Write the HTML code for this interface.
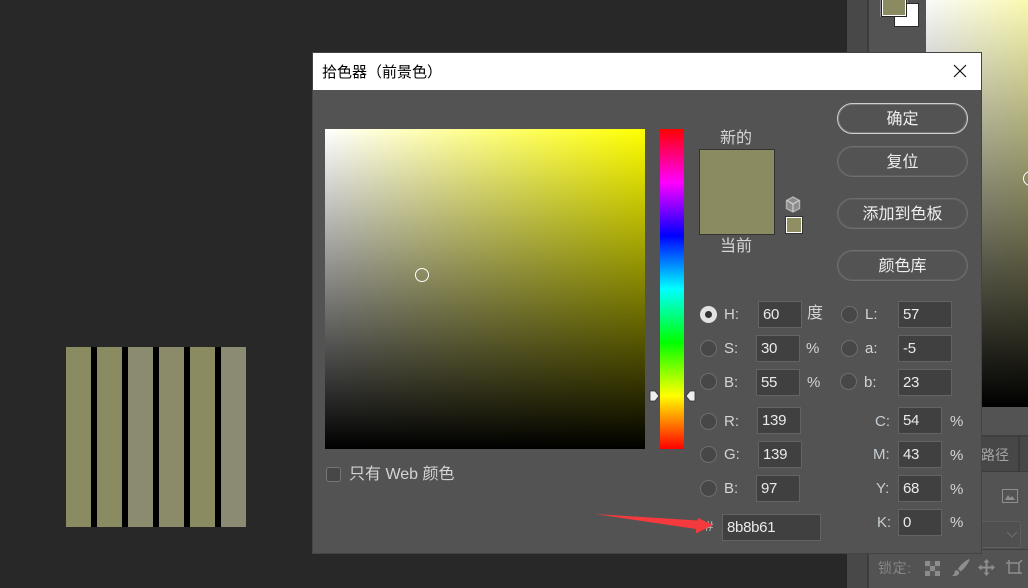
<!DOCTYPE html>
<html><head><meta charset="utf-8">
<style>
html,body{margin:0;padding:0;width:1028px;height:588px;overflow:hidden;background:#282828}
body{position:relative;font-family:"Liberation Sans","Noto Sans CJK SC",sans-serif;font-size:15px;color:#dcdcdc}
div,span{position:absolute;box-sizing:border-box}
.bar{top:347px;width:25px;height:180px}
.in{height:27px;background:#404040;border:1px solid #636363;color:#eaeaea;font-size:15px;letter-spacing:-.3px;line-height:26px;padding-left:4px;white-space:nowrap}
.r{width:17px;height:17px;border-radius:50%;background:#474747;border:1px solid #6e6e6e}
.l{line-height:20px;height:20px;white-space:nowrap;color:#d4d4d4;transform:translateY(1px)}
.btn{left:837px;width:131px;border:1px solid #6e6e6e;box-shadow:inset 0 0 0 1px #5e5e5e;border-radius:16px;text-align:center;color:#eeeeee;font-size:16px;line-height:32px;height:31px}
</style></head><body>

<div class="bar" style="left:66px;background:#8b8b61"></div>
<div class="bar" style="left:97px;background:#8b8b61"></div>
<div class="bar" style="left:128px;background:#8b8b6f"></div>
<div class="bar" style="left:159px;background:#8b8b69"></div>
<div class="bar" style="left:190px;background:#8b8b61"></div>
<div class="bar" style="left:221px;background:#8b8b74"></div>
<div style="left:91px;top:347px;width:6px;height:180px;background:#000"></div>
<div style="left:122px;top:347px;width:6px;height:180px;background:#000"></div>
<div style="left:153px;top:347px;width:6px;height:180px;background:#000"></div>
<div style="left:184px;top:347px;width:6px;height:180px;background:#000"></div>
<div style="left:215px;top:347px;width:6px;height:180px;background:#000"></div>

<!-- right app panels -->
<div style="left:847px;top:0;width:181px;height:588px;background:#535353"></div>
<div style="left:847px;top:0;width:21px;height:588px;background:#484848"></div>
<div style="left:867px;top:0;width:2px;height:588px;background:#3c3c3c"></div>
<div style="left:880px;top:0;width:28px;height:17px;background:#8a8a8a"></div>
<div style="left:894px;top:3px;width:25px;height:24px;background:#fff;border:1px solid #2a2a2a"></div>
<div style="left:882px;top:0;width:24px;height:16px;background:#8b8b61;border:1px solid #fff;border-top:0;outline:1px solid #222"></div>

<div style="left:926px;top:0;width:102px;height:407px;overflow:hidden;background:#000">
  <div style="left:0;top:-9px;width:347px;height:416px;background:linear-gradient(to top,#000,rgba(0,0,0,0)),linear-gradient(to right,#fff,#ff0)"></div>
  <div style="left:97px;top:171px;width:15px;height:15px;border-radius:50%;border:1px solid #fff"></div>
</div>
<div style="left:869px;top:407px;width:159px;height:181px;background:#535353"></div>
<div style="left:869px;top:435px;width:159px;height:2px;background:#3f3f3f"></div>
<div style="left:869px;top:437px;width:159px;height:35px;background:#474747;border-bottom:1px solid #3c3c3c"></div>
<div style="left:1018px;top:437px;width:2px;height:35px;background:#3c3c3c"></div>
<div style="left:981px;top:445px;font-size:14px;line-height:20px;color:#a6a6a6">路径</div>
<svg style="position:absolute;left:1002px;top:489px" width="16" height="14" viewBox="0 0 16 14"><rect x=".5" y=".5" width="15" height="13" fill="none" stroke="#8e8e8e"/><path d="M3 11l3-5 2 3 2-2 3 4z" fill="#8e8e8e"/></svg>
<div style="left:980px;top:521px;width:41px;height:27px;border:1px solid #5e5e5e;border-radius:3px;background:#505050"></div>
<svg style="position:absolute;left:1006px;top:531px" width="12" height="8" viewBox="0 0 12 8"><path d="M1 1l5 5 5-5" fill="none" stroke="#6e6e6e"/></svg>
<div style="left:869px;top:549px;width:159px;height:1px;background:#3f3f3f"></div>
<div style="left:878px;top:558px;font-size:14px;line-height:20px;color:#858585;letter-spacing:.6px">锁定:</div>
<svg style="position:absolute;left:925px;top:561px" width="15" height="15" viewBox="0 0 15 15"><rect width="15" height="15" fill="#8c8c8c"/><path d="M5 0h5v5H5zM0 5h5v5H0zM10 5h5v5h-5zM5 10h5v5H5z" fill="#5a5a5a"/></svg>
<svg style="position:absolute;left:952px;top:559px" width="18" height="18" viewBox="0 0 18 18"><path d="M17 0C13 2 8 6 6 10l2.500 2.500C12 10 16 5 17.500 1zM5 11c-2 0-2.500 2-2.500 3 0 1-1 2-2.500 3 4 .5 8-1 7-4z" fill="#8e8e8e"/></svg>
<svg style="position:absolute;left:978px;top:559px" width="17" height="17" viewBox="0 0 17 17"><path d="M8.500 0l3 3.500h-2v4h4v-2l3.500 3-3.500 3v-2h-4v4h2l-3 3.500-3-3.500h2v-4h-4v2L0 8.500l3.500-3v2h4v-4h-2z" fill="#8e8e8e"/></svg>
<svg style="position:absolute;left:1005px;top:559px" width="19" height="17" viewBox="0 0 19 17"><path d="M4 1v13h13M1 4h13v11M14 4l3-3" fill="none" stroke="#8e8e8e" stroke-width="1.500"/></svg>

<!-- dialog -->
<div style="left:312px;top:52px;width:670px;height:502px;background:#444"></div>
<div style="left:313px;top:53px;width:668px;height:500px;background:#535353"></div>
<div style="left:313px;top:53px;width:668px;height:37px;background:#fff"></div>
<div style="left:322px;top:63px;color:#000;font-size:15px;line-height:20px;white-space:nowrap">拾色器（前景色）</div>
<svg style="position:absolute;left:953px;top:64px" width="14" height="14" viewBox="0 0 14 14"><path d="M1 1l12 12M13 1L1 13" stroke="#111" stroke-width="1.200" fill="none"/></svg>

<!-- field -->
<div style="left:325px;top:129px;width:320px;height:320px;background:linear-gradient(to top,#000,rgba(0,0,0,0)),linear-gradient(to right,#fff,#ff0)"></div>
<div style="left:415px;top:268px;width:14px;height:14px;border-radius:50%;border:1px solid #fff"></div>
<!-- hue -->
<div style="left:660px;top:129px;width:24px;height:320px;background:linear-gradient(to bottom,#f00 0%,#f0f 16.67%,#00f 33.33%,#0ff 50%,#0f0 66.67%,#ff0 83.33%,#f00 100%)"></div>
<svg style="position:absolute;left:649px;top:390px" width="11" height="12" viewBox="0 0 11 12"><path d="M1 1h5l4 5-4 5H1z" fill="#eee" stroke="#333" stroke-width=".8"/></svg>
<svg style="position:absolute;left:685px;top:390px" width="11" height="12" viewBox="0 0 11 12"><path d="M10 1H5L1 6l4 5h5z" fill="#eee" stroke="#333" stroke-width=".8"/></svg>

<div class="l" style="left:720px;top:128px;font-size:16px">新的</div>
<div style="left:699px;top:149px;width:76px;height:86px;background:#8b8b61;border:1px solid #333"></div>
<div class="l" style="left:720px;top:236px;font-size:16px">当前</div>
<svg style="position:absolute;left:785px;top:196px" width="16" height="17" viewBox="0 0 16 17"><path d="M8 1l6.500 3.500v8L8 16l-6.500-3.500v-8z" fill="#8c8c8c" stroke="#b4b4b4" stroke-width="1.400"/><path d="M2 4.500L8 8l6-3.500M8 8v8" fill="none" stroke="#cfcfcf" stroke-width="1.200"/></svg>
<div style="left:786px;top:217px;width:16px;height:16px;background:#8f8f63;border:1px solid #fff;box-shadow:0 0 0 1px #333"></div>

<!-- buttons -->
<div class="btn" style="top:103px;border-color:#cfcfcf;box-shadow:inset 0 0 0 1px #777">确定</div>
<div class="btn" style="top:146px">复位</div>
<div class="btn" style="top:198px">添加到色板</div>
<div class="btn" style="top:250px">颜色库</div>

<!-- radios -->
<div class="r" style="left:700px;top:306px;background:#e2e2e2;border-color:#e2e2e2"></div>
<div style="left:705px;top:311px;width:7px;height:7px;border-radius:50%;background:#333"></div>
<div class="r" style="left:700px;top:340px"></div>
<div class="r" style="left:700px;top:373px"></div>
<div class="r" style="left:700px;top:413px"></div>
<div class="r" style="left:700px;top:446px"></div>
<div class="r" style="left:700px;top:480px"></div>
<div class="r" style="left:841px;top:306px"></div>
<div class="r" style="left:841px;top:340px"></div>
<div class="r" style="left:840px;top:373px"></div>

<!-- labels -->
<div class="l" style="left:724px;top:304px">H:</div>
<div class="l" style="left:724px;top:338px">S:</div>
<div class="l" style="left:724px;top:372px">B:</div>
<div class="l" style="left:724px;top:411px">R:</div>
<div class="l" style="left:724px;top:444px">G:</div>
<div class="l" style="left:724px;top:478px">B:</div>
<div class="l" style="left:865px;top:304px">L:</div>
<div class="l" style="left:865px;top:338px">a:</div>
<div class="l" style="left:864px;top:372px">b:</div>
<div class="l" style="left:875px;top:411px;color:#c6ced4">C:</div>
<div class="l" style="left:873px;top:444px;color:#c6ced4">M:</div>
<div class="l" style="left:876px;top:478px;color:#c6ced4">Y:</div>
<div class="l" style="left:877px;top:512px;color:#c6ced4">K:</div>

<div class="l" style="left:807px;top:303px;font-size:16px">度</div>
<div class="l" style="left:806px;top:338px">%</div>
<div class="l" style="left:807px;top:372px">%</div>
<div class="l" style="left:950px;top:411px">%</div>
<div class="l" style="left:950px;top:445px">%</div>
<div class="l" style="left:950px;top:479px">%</div>
<div class="l" style="left:950px;top:512px">%</div>

<!-- inputs -->
<div class="in" style="left:758px;top:301px;width:44px">60</div>
<div class="in" style="left:756px;top:335px;width:44px">30</div>
<div class="in" style="left:756px;top:369px;width:44px">55</div>
<div class="in" style="left:757px;top:407px;width:44px">139</div>
<div class="in" style="left:758px;top:441px;width:44px">139</div>
<div class="in" style="left:756px;top:475px;width:44px">97</div>
<div class="in" style="left:898px;top:301px;width:54px">57</div>
<div class="in" style="left:898px;top:335px;width:54px">-5</div>
<div class="in" style="left:898px;top:369px;width:54px">23</div>
<div class="in" style="left:898px;top:407px;width:44px">54</div>
<div class="in" style="left:898px;top:441px;width:44px">43</div>
<div class="in" style="left:898px;top:475px;width:44px">68</div>
<div class="in" style="left:898px;top:509px;width:44px">0</div>
<div class="in" style="left:722px;top:514px;width:99px;line-height:26px">8b8b61</div>

<!-- web only -->
<div style="left:326px;top:467px;width:15px;height:15px;border:1px solid #757575;border-radius:3px;background:#474747"></div>
<div class="l" style="left:349px;top:464px;font-size:16px">只有 Web 颜色</div>

<!-- hash and arrow -->
<div class="l" style="left:705px;top:516px;color:#bdbdbd">#</div>
<svg style="position:absolute;left:590px;top:510px" width="130" height="30" viewBox="0 0 130 30"><path d="M5 4L108 10.500 108 8 123 15 106 23.500 106 19z" fill="#f43a3c"/></svg>
</body></html>
